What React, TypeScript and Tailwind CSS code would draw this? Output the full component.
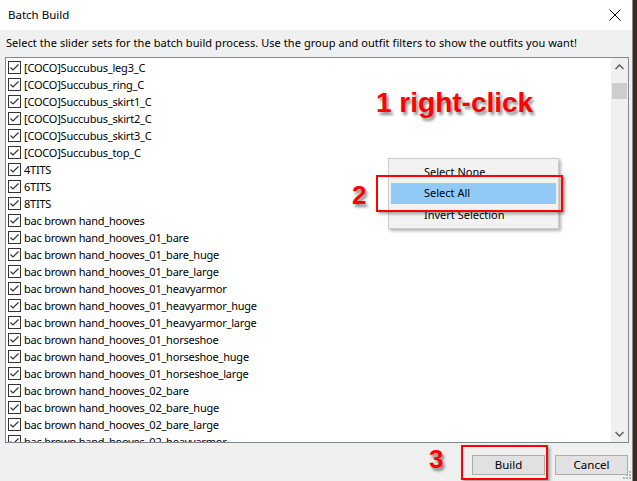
import React from "react";

const items = [
  "[COCO]Succubus_leg3_C",
  "[COCO]Succubus_ring_C",
  "[COCO]Succubus_skirt1_C",
  "[COCO]Succubus_skirt2_C",
  "[COCO]Succubus_skirt3_C",
  "[COCO]Succubus_top_C",
  "4TITS",
  "6TITS",
  "8TITS",
  "bac brown hand_hooves",
  "bac brown hand_hooves_01_bare",
  "bac brown hand_hooves_01_bare_huge",
  "bac brown hand_hooves_01_bare_large",
  "bac brown hand_hooves_01_heavyarmor",
  "bac brown hand_hooves_01_heavyarmor_huge",
  "bac brown hand_hooves_01_heavyarmor_large",
  "bac brown hand_hooves_01_horseshoe",
  "bac brown hand_hooves_01_horseshoe_huge",
  "bac brown hand_hooves_01_horseshoe_large",
  "bac brown hand_hooves_02_bare",
  "bac brown hand_hooves_02_bare_huge",
  "bac brown hand_hooves_02_bare_large",
  "bac brown hand_hooves_02_heavyarmor",
];

function CheckBox() {
  return (
    <span className="flex h-[13px] w-[13px] shrink-0 items-center justify-center border border-[#333333] bg-white">
      <svg width="11" height="11" viewBox="0 0 11 11">
        <path d="M1.5 5.5 L4 8 L9.5 2.5" fill="none" stroke="#333333" strokeWidth="1.2" />
      </svg>
    </span>
  );
}

function Annotation({ children, className }: { children: React.ReactNode; className: string }) {
  return (
    <div
      className={
        "absolute font-['Liberation_Sans',Arial,sans-serif] font-bold leading-none text-[#ff0000] [text-shadow:2px_3px_3px_rgba(0,0,0,0.45)] " +
        className
      }
    >
      {children}
    </div>
  );
}

export default function App() {
  return (
    <div className="relative flex h-[481px] w-[637px] overflow-hidden bg-[#f0f0f0] font-['Noto_Sans','Open_Sans',sans-serif] text-[11px] text-black">
      <div className="flex w-[633px] flex-col border-r border-[#8a8a8a]">
        {/* title bar */}
        <div className="flex h-[30px] shrink-0 items-center justify-between bg-white pl-[8px] pr-[8px]">
          <span className="text-[11.5px]">Batch Build</span>
          <svg width="12" height="12" viewBox="0 0 12 12" className="mr-[3px]">
            <path d="M0.5 0.5 L11.5 11.5 M11.5 0.5 L0.5 11.5" stroke="#000" strokeWidth="1" />
          </svg>
        </div>

        {/* instructions */}
        <div className="flex h-[27px] shrink-0 items-center pl-[6px] tracking-[0.06px]">
          Select the slider sets for the batch build process. Use the group and outfit filters to show the outfits you want!
        </div>

        {/* list box */}
        <div className="ml-[5px] flex h-[386px] w-[624px] shrink-0 border border-[#828790] bg-white">
          <div className="flex flex-1 flex-col overflow-hidden pt-[1px]">
            {items.map((name) => (
              <div key={name} className="flex h-[17px] shrink-0 items-center gap-[3px] pl-[2px]">
                <CheckBox />
                <span className="whitespace-nowrap text-[11px] leading-none tracking-[-0.22px]">{name}</span>
              </div>
            ))}
          </div>
          {/* scrollbar */}
          <div className="flex w-[17px] flex-col bg-[#f0f0f0]">
            <div className="flex h-[17px] items-center justify-center">
              <svg width="9" height="6" viewBox="0 0 9 6">
                <path d="M0.5 5 L4.5 1 L8.5 5" fill="none" stroke="#606060" strokeWidth="1.5" />
              </svg>
            </div>
            <div className="mx-[1px] mt-[8px] h-[16px] bg-[#cdcdcd]" />
            <div className="flex-1" />
            <div className="flex h-[17px] items-center justify-center">
              <svg width="9" height="6" viewBox="0 0 9 6">
                <path d="M0.5 1 L4.5 5 L8.5 1" fill="none" stroke="#606060" strokeWidth="1.5" />
              </svg>
            </div>
          </div>
        </div>

        {/* buttons */}
        <div className="flex flex-1 items-start justify-end gap-[10px] pr-[4px] pt-[12px]">
          <button className="flex h-[20px] w-[73px] items-center justify-center border border-[#adadad] bg-[#e1e1e1] text-[11.5px]">
            Build
          </button>
          <button className="flex h-[20px] w-[73px] items-center justify-center border border-[#adadad] bg-[#e1e1e1] text-[11.5px]">
            Cancel
          </button>
        </div>
      </div>
      <div className="flex-1 bg-[#3b2b22]" />

      {/* resize grip */}
      <svg className="absolute left-[622px] top-[470px]" width="10" height="10" viewBox="0 0 10 10">
        <g fill="#b8b8b8">
          <rect x="7" y="1" width="2" height="2" />
          <rect x="4" y="4" width="2" height="2" />
          <rect x="7" y="4" width="2" height="2" />
          <rect x="1" y="7" width="2" height="2" />
          <rect x="4" y="7" width="2" height="2" />
          <rect x="7" y="7" width="2" height="2" />
        </g>
      </svg>

      {/* context menu */}
      <div className="absolute left-[388px] top-[158px] flex h-[71px] w-[171px] flex-col border border-[#cccccc] bg-[#f2f2f2] px-[2px] py-[2px] shadow-[2px_2px_3px_rgba(0,0,0,0.3)]">
        <div className="flex h-[22px] items-center pl-[33px]">Select None</div>
        <div className="flex h-[22px] items-center bg-[#91c9f7] pl-[33px]">Select All</div>
        <div className="flex h-[22px] items-center pl-[33px]">Invert Selection</div>
      </div>

      {/* red highlight frames */}
      <div className="absolute left-[376px] top-[175px] h-[37px] w-[187px] border-2 border-[#ff0000] shadow-[2px_2px_3px_rgba(0,0,0,0.35)]" />
      <div className="absolute left-[461px] top-[445px] h-[35px] w-[87px] border-2 border-[#ff0000] shadow-[2px_2px_3px_rgba(0,0,0,0.35)]" />

      <Annotation className="left-[376px] top-[89px] text-[28px]">1 right-click</Annotation>
      <Annotation className="left-[352px] top-[182px] text-[26px]">2</Annotation>
      <Annotation className="left-[429px] top-[446px] text-[26px]">3</Annotation>
    </div>
  );
}
